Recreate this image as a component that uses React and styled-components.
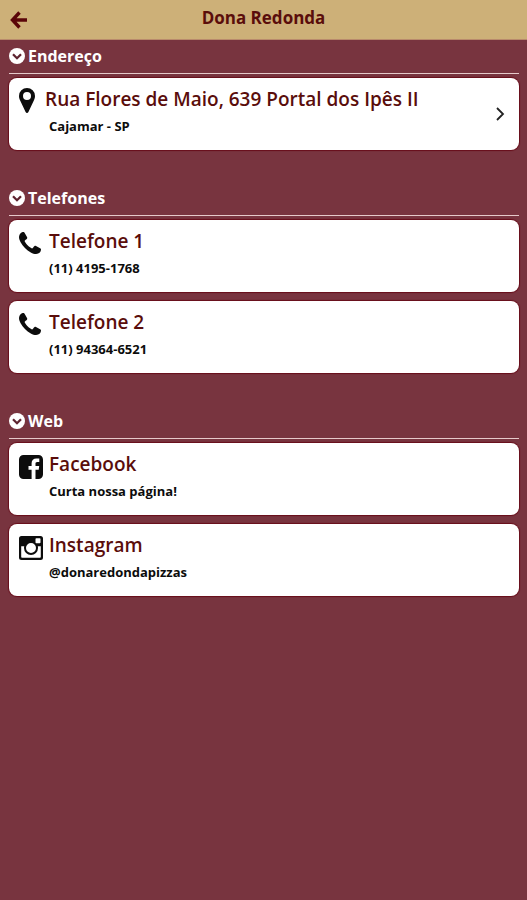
import React from 'react';
import styled, { createGlobalStyle } from 'styled-components';

const GlobalStyle = createGlobalStyle`
  *,
  *::before,
  *::after {
    box-sizing: border-box;
  }

  body {
    margin: 0;
    background: #78343f;
    font-family: 'Open Sans', 'Noto Sans', sans-serif;
  }
`;

const StyledHeader = styled.header`
  display: grid;
  grid-template-columns: 40px 1fr 40px;
  align-items: center;
  height: 40px;
  background: #cdb078;
  border-bottom: 1px solid #b98a6c;

  h1 {
    margin: 0;
    padding-bottom: 4px;
    color: #5a0d0b;
    font-size: 17px;
    font-weight: 700;
    line-height: 24px;
    text-align: center;
  }
`;

const BackButton = styled.button`
  display: flex;
  align-items: center;
  height: 39px;
  padding: 0 0 0 10px;
  border: 0;
  background: transparent;
  color: #5a0508;
  cursor: pointer;
`;

const StyledMain = styled.main`
  display: flex;
  flex-direction: column;
  gap: 32px;
  padding: 0 8px 32px 9px;
`;

const SectionTitle = styled.h2`
  display: flex;
  align-items: center;
  gap: 3px;
  height: 34px;
  margin: 0 0 4px;
  padding-bottom: 2px;
  border-bottom: 1px solid #e6c9ca;
  color: #fff;
  font-size: 16px;
  font-weight: 700;
  line-height: 24px;
`;

const CardList = styled.ul`
  display: flex;
  flex-direction: column;
  gap: 9px;
  margin: 0;
  padding: 0;
  list-style: none;
`;

const Card = styled.a`
  display: flex;
  align-items: flex-start;
  min-height: 72px;
  padding: 7px 12px 8px 10px;
  border-radius: 8px;
  background: #fff;
  box-shadow: 0 0 1px 1px #680d1a;
  color: #0c0c0c;
  text-decoration: none;
`;

const IconBox = styled.span`
  display: flex;
  flex: none;
  width: ${({ $narrow }) => ($narrow ? '26px' : '30px')};
  padding-top: ${({ $narrow }) => ($narrow ? '3px' : '5px')};
`;

const CardBody = styled.span`
  display: flex;
  flex: 1;
  flex-direction: column;
`;

const CardTitle = styled.span`
  color: #5a0d0b;
  font-size: 19px;
  font-weight: 600;
  line-height: 28px;
`;

const CardText = styled.span`
  padding-left: ${({ $indent }) => ($indent ? '4px' : '0')};
  font-size: 13px;
  font-weight: 700;
  line-height: 26px;
`;

const Arrow = styled.span`
  display: flex;
  align-self: center;
`;

const ArrowLeftIcon = () => (
  <svg width="18" height="18" viewBox="0 0 18 18" fill="none" stroke="currentColor" aria-hidden="true">
    <path d="M9.5 1.5 2.5 9l7 7.5M3 9h14" strokeWidth="3.4" />
  </svg>
);

const CircleDownIcon = () => (
  <svg width="16" height="16" viewBox="0 0 16 16" aria-hidden="true">
    <circle cx="8" cy="8" r="8" fill="#fff" />
    <path d="M4 6.3 8 10.2l4-3.9" fill="none" stroke="#5e2430" strokeWidth="2.3" />
  </svg>
);

const PinIcon = () => (
  <svg width="16" height="25" viewBox="0 0 16 25" fill="currentColor" aria-hidden="true">
    <path
      fillRule="evenodd"
      d="M8 0a8 8 0 0 0-8 8c0 2 .7 3.500 1.500 5.200L6.600 24c.6 1.300 2.200 1.300 2.800 0l5.100-10.800C15.300 11.500 16 10 16 8a8 8 0 0 0-8-8Zm0 4a4 4 0 1 1 0 8 4 4 0 0 1 0-8Z"
    />
  </svg>
);

const PhoneIcon = () => (
  <svg width="22" height="22" viewBox="0 0 22 22" fill="currentColor" aria-hidden="true">
    <path d="M22 17.300c0 .5-.1 1.500-.5 2.200-.5 1.200-2.800 2.500-4.500 2.500-1.600 0-3.300-.6-5.200-1.600-4.300-2.300-7.900-5.900-10.200-10.200C.6 8.300 0 6.600 0 5 0 3.300 1.300 1 2.500.5 3.200.1 4.200 0 4.700 0c.4 0 .6.200 1 .9L8 5c.3.600.4.900.1 1.400C7.600 7.200 5.600 8.300 5.600 9c0 .5.500 1.100.8 1.600 1.200 2.100 2.900 3.800 5 5 .5.300 1.100.8 1.600.8.700 0 1.800-2 2.600-2.500.5-.3.800-.2 1.400.1l4.100 2.300c.7.400.9.600.9 1Z" />
  </svg>
);

const FacebookIcon = () => (
  <svg width="24" height="24" viewBox="0 0 24 24" fill="currentColor" aria-hidden="true">
    <path d="M4.500 0h15A4.500 4.500 0 0 1 24 4.500v15a4.500 4.500 0 0 1-4.500 4.500h-3v-9.300h3.200l.5-3.700h-3.700V8.700c0-1 .3-1.800 1.800-1.800h2V3.600c-.4-.1-1.500-.2-2.900-.2-2.900 0-4.800 1.700-4.800 4.900V11H9.500v3.700h3.100V24H4.500A4.500 4.500 0 0 1 0 19.500v-15A4.500 4.500 0 0 1 4.500 0Z" />
  </svg>
);

const InstagramIcon = () => (
  <svg width="24" height="24" viewBox="0 0 24 24" aria-hidden="true">
    <path
      fill="currentColor"
      fillRule="evenodd"
      d="M2.500 0h19A2.500 2.500 0 0 1 24 2.500v19a2.500 2.500 0 0 1-2.500 2.500h-19A2.500 2.500 0 0 1 0 21.500v-19A2.500 2.500 0 0 1 2.500 0Zm14.800 2.300a.8.800 0 0 0-.8.8v3.400c0 .4.400.8.800.8h3.400c.4 0 .8-.4.800-.8V3.100a.8.800 0 0 0-.8-.8ZM2.200 10.200v10.800c0 .4.400.8.800.8h18c.4 0 .8-.4.800-.8V10.200h-3c.2.600.2 1.200.2 1.800a7 7 0 0 1-14 0c0-.6.100-1.200.2-1.800ZM12 7a5 5 0 1 0 0 10 5 5 0 0 0 0-10Z"
    />
  </svg>
);

const ChevronRightIcon = () => (
  <svg width="14" height="14" viewBox="0 0 14 14" fill="none" stroke="#222" aria-hidden="true">
    <path d="M4 1l6 6-6 6" strokeWidth="1.800" />
  </svg>
);

const sections = [
  {
    title: 'Endereço',
    items: [
      {
        title: 'Rua Flores de Maio, 639 Portal dos Ipês II',
        text: 'Cajamar - SP',
        href: '#mapa',
        Icon: PinIcon,
        narrow: true,
        arrow: true,
      },
    ],
  },
  {
    title: 'Telefones',
    items: [
      { title: 'Telefone 1', text: '(11) 4195-1768', href: 'tel:+551141951768', Icon: PhoneIcon },
      { title: 'Telefone 2', text: '(11) 94364-6521', href: 'tel:+5511943646521', Icon: PhoneIcon },
    ],
  },
  {
    title: 'Web',
    items: [
      { title: 'Facebook', text: 'Curta nossa página!', href: '#facebook', Icon: FacebookIcon },
      { title: 'Instagram', text: '@donaredondapizzas', href: '#instagram', Icon: InstagramIcon },
    ],
  },
];

const App = () => (
  <>
    <GlobalStyle />
    <StyledHeader>
      <BackButton type="button" aria-label="Voltar">
        <ArrowLeftIcon />
      </BackButton>
      <h1>Dona Redonda</h1>
    </StyledHeader>

    <StyledMain>
      {sections.map(({ title, items }) => (
        <section key={title}>
          <SectionTitle>
            <CircleDownIcon />
            {title}
          </SectionTitle>
          <CardList>
            {items.map(({ title, text, href, Icon, narrow, arrow }) => (
              <li key={title}>
                <Card href={href}>
                  <IconBox $narrow={narrow}>
                    <Icon />
                  </IconBox>
                  <CardBody>
                    <CardTitle>{title}</CardTitle>
                    <CardText $indent={narrow}>{text}</CardText>
                  </CardBody>
                  {arrow && (
                    <Arrow>
                      <ChevronRightIcon />
                    </Arrow>
                  )}
                </Card>
              </li>
            ))}
          </CardList>
        </section>
      ))}
    </StyledMain>
  </>
);

export default App;
